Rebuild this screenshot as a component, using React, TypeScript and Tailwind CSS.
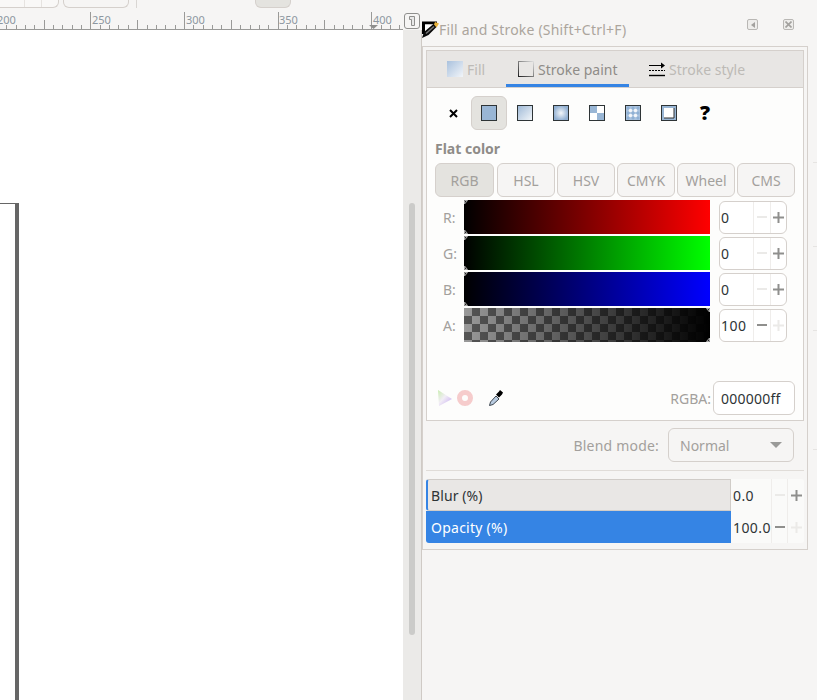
import React from "react";

const ticks: React.ReactNode[] = [];
for (let i = -1; i < 44; i++) {
  const x = 90.4 + (i - 10) * 9.36;
  const k = ((i % 10) + 10) % 10;
  const y = k === 0 ? 12 : k === 5 ? 20 : 25;
  ticks.push(<line key={i} x1={Math.round(x) + 0.5} x2={Math.round(x) + 0.5} y1={y} y2={29} stroke="#9a9a98" strokeWidth="1" />);
}

function Ruler() {
  return (
    <svg width="403" height="30" className="block absolute left-0 top-0">
      {ticks}
      <rect x="0" y="29" width="403" height="1" fill="#9a9a98" />
      {[[-3, "200"], [92, "250"], [186, "300"], [279, "350"], [373, "400"]].map(([x, t]) => (
        <text key={t as string} x={x as number} y="24" fontSize="11" fill="#8d97a0" fontFamily="Noto Sans, sans-serif">{t}</text>
      ))}
      <polygon points="369,25 378,25 373.5,29" fill="#8f8f8d" />
    </svg>
  );
}

function TitleIcon() {
  return (
    <svg width="17" height="17" viewBox="0 0 17 17">
      <path d="M0 0.5h15v3H3V13H0z" fill="#000" />
      <path d="M3 3.500H12.500L3 12z" fill="#fff" />
      <path d="M0 17l2-6 10-8.500 3 3-8.500 8.500z" fill="#0a0a0a" />
      <path d="M3.500 12l8-7 1 1-8 7z" fill="#777" />
      <path d="M13 1l4 1.500-2.500 4-2.500-3z" fill="#e8b23a" />
    </svg>
  );
}

function Mode({ kind }: { kind: string }) {
  const st = "#2e3436";
  return (
    <svg width="16" height="16" viewBox="0 0 16 16">
      <defs>
        <linearGradient id={"lin" + kind} x1="0" x2="1" y1="0" y2="1">
          <stop offset="0" stopColor="#9db8d6" />
          <stop offset="1" stopColor="#f4f7fa" />
        </linearGradient>
        <radialGradient id={"rad" + kind}>
          <stop offset="0" stopColor="#f4f7fa" />
          <stop offset="1" stopColor="#92b0d2" />
        </radialGradient>
      </defs>
      {kind === "flat" && <rect x="0.5" y="0.5" width="15" height="15" fill="#99b6d5" stroke={st} />}
      {kind === "lin" && <rect x="0.5" y="0.5" width="15" height="15" fill={"url(#lin" + kind + ")"} stroke={st} />}
      {kind === "rad" && <rect x="0.5" y="0.5" width="15" height="15" fill={"url(#rad" + kind + ")"} stroke={st} />}
      {kind === "mesh" && (
        <>
          <rect x="0.5" y="0.5" width="15" height="15" fill="#fff" />
          <rect x="1" y="1" width="7" height="7" fill="#99b6d5" />
          <rect x="8" y="8" width="7" height="7" fill="#99b6d5" />
          <rect x="0.5" y="0.5" width="15" height="15" fill="none" stroke={st} />
        </>
      )}
      {kind === "pat" && (
        <>
          <rect x="0.5" y="0.5" width="15" height="15" fill="#a9c2de" />
          {[5.5, 10.5].flatMap((x) => [5.5, 10.5].map((y) => <circle key={x + "-" + y} cx={x} cy={y} r="1.8" fill="#f3f6fa" />))}
          {[3, 8, 13].flatMap((x) => [3, 8, 13].map((y) => <circle key={"d" + x + "-" + y} cx={x} cy={y} r="1.5" fill="#8fb0d4" />))}
          <rect x="0.5" y="0.5" width="15" height="15" fill="none" stroke={st} />
        </>
      )}
      {kind === "swatch" && (
        <>
          <rect x="0.5" y="0.5" width="15" height="15" fill="#99b6d5" stroke={st} />
          <rect x="3" y="3" width="10" height="10" fill="#fff" />
          <path d="M13 3v10H3" fill="none" stroke="#333" strokeWidth="1" />
        </>
      )}
    </svg>
  );
}

function Spin({ value, minusOn, plusOn }: { value: string; minusOn: boolean; plusOn: boolean }) {
  return (
    <div className="flex h-[33px] w-[68px] rounded-md border border-[#d5d0cc] bg-white">
      <div className="w-[33px] pl-[1px] flex items-center text-[14px] tracking-[0.5px] text-[#2e3436]">{value}</div>
      <div className="w-[17px] border-l border-[#efedeb] flex items-center justify-center">
        <span className={"block h-[2px] w-[10px] " + (minusOn ? "bg-[#8f8f8d]" : "bg-[#ebeae8]")} />
      </div>
      <div className="flex-1 border-l border-[#efedeb] flex items-center justify-center">
        <PlusMark on={plusOn} />
      </div>
    </div>
  );
}

function PlusMark({ on }: { on: boolean }) {
  return (
    <svg width="11" height="11" viewBox="0 0 11 11">
      <path d="M0 5.5h11M5.5 0v11" stroke={on ? "#8f8f8d" : "#ebeae8"} strokeWidth="2" />
    </svg>
  );
}

function Marker({ side, v }: { side: "l" | "r"; v: "t" | "b" }) {
  const pts = side === "l" ? (v === "t" ? "0.5,4 3.5,0.5 0.5,0.5" : "0.5,0 3.5,3.5 0.5,3.5") : v === "t" ? "0.5,0.5 3.5,0.5 3.5,4" : "3.5,0 3.5,3.5 0.5,3.5";
  const pos = (side === "l" ? "left-0 " : "right-0 ") + (v === "t" ? "top-0" : "bottom-0");
  return (
    <svg width="4" height="4" className={"absolute " + pos}>
      <polygon points={pts} fill="#222" stroke="#a8a8a8" strokeWidth="1" />
    </svg>
  );
}

function SliderRow({ label, bar, value, side = "l", minusOn = false, plusOn = true }: { label: string; bar: string; value: string; side?: "l" | "r"; minusOn?: boolean; plusOn?: boolean }) {
  return (
    <div className="flex items-center h-[34px] mb-[2px]">
      <span className="w-[29px] pl-[8px] text-[14px] text-[#a3a09c]">{label}</span>
      <div className={"relative h-[34px] w-[246px] " + bar}>
        <Marker side={side} v="t" />
        <Marker side={side} v="b" />
      </div>
      <div className="ml-[9px]">
        <Spin value={value} minusOn={minusOn} plusOn={plusOn} />
      </div>
    </div>
  );
}

export default function App() {
  return (
    <div className="relative flex h-[700px] w-[817px] overflow-hidden bg-[#f6f5f4] font-['Noto_Sans',sans-serif] text-[14px]">
      {/* Left: rulers and canvas */}
      <div className="relative flex h-full w-[422px] flex-col pt-[30px]">
        <Ruler />
        <div className="absolute left-0 top-0 flex h-[8px] items-start">
          <div className="flex h-[8px] w-[59px] rounded-br-md border-b border-r border-[#d5d0cc] bg-[#f9f8f7]">
            <div className="w-[25px] border-r border-[#e6e3e0]" />
            <div className="w-[17px] border-r border-[#e6e3e0]" />
          </div>
          <div className="ml-[4px] h-[8px] w-[66px] rounded-b-md border border-t-0 border-[#d5d0cc]" />
          <div className="ml-[7px] h-[8px] w-px bg-[#d9d6d3]" />
          <div className="ml-[118px] h-[8px] w-[36px] rounded-b-md border border-t-0 border-[#d5d0cc] bg-[#e4e3df]" />
        </div>
        <div className="absolute left-[404px] top-[13px] flex h-[16px] w-[16px] items-center justify-center rounded-[3px] border border-[#8f8f8d] bg-[#f6f5f4] z-10">
          <svg width="8" height="10" viewBox="0 0 8 10">
            <path d="M1.5.5h5v9h-3v-6h-2z" fill="#e8e8e8" stroke="#8f8f8d" />
          </svg>
        </div>
        <div className="flex flex-1">
          <div className="w-[403px] bg-white pt-[173px]">
            <div className="h-full w-[19px] border-r-[4px] border-t border-[#666666]" />
          </div>
          <div className="w-[19px] border-r border-[#cfcac5] bg-[#ebeae8] px-[6px] pt-[173px]">
            <div className="h-[432px] w-[6px] rounded-[3px] bg-[#cbcbc9]" />
          </div>
        </div>
      </div>

      {/* Right: dialog */}
      <div className="flex flex-1 flex-col">
        <div className="flex h-[46px] items-start">
          <div className="mt-[21px]"><TitleIcon /></div>
          <span className="mt-[20px] text-[14px] leading-[20px] tracking-[0.2px] text-[#aca59d]">Fill and Stroke (Shift+Ctrl+F)</span>
          <div className="ml-[121px] mt-[19px] flex h-[11px] w-[11px] items-center justify-center rounded-[2px] border border-[#b9b7b4] bg-[#eeedeb]">
            <span className="block h-0 w-0 border-y-[3px] border-r-[4px] border-y-transparent border-r-[#a3a19e]" />
          </div>
          <div className="ml-[25px] mt-[19px] flex h-[11px] w-[11px] items-center justify-center rounded-[2px] border border-[#b9b7b4] bg-[#eeedeb]">
            <svg width="7" height="7" viewBox="0 0 7 7"><path d="M0.5.5l6 6M6.5.5l-6 6" stroke="#a3a19e" strokeWidth="1.6" /></svg>
          </div>
        </div>

        <div className="h-[504px] w-[386px] border border-[#d5d0cc] pl-[3px] pr-[3px] pt-[3px]">
          {/* Notebook */}
          <div className="h-[371px] w-[378px] border border-[#d5d0cc] bg-[#fdfdfc]">
            <div className="flex h-[37px] items-start border-b border-[#d5d0cc] bg-[#e8e6e4]">
              <div className="flex h-[36px] w-[79px] items-center pl-[20px]">
                <span className="block h-[16px] w-[16px] bg-linear-to-br/srgb from-[#a9c1dd] to-[#f2f5f9]" />
                <span className="ml-[4px] text-[#bdbab6]">Fill</span>
              </div>
              <div className="flex h-[36px] w-[123px] items-center border-b-[3px] border-[#3584e4] pl-[12px] pt-[3px]">
                <svg width="16" height="16" viewBox="0 0 16 16">
                  <defs>
                    <linearGradient id="strokeTab" x1="0" x2="1" y1="1" y2="0">
                      <stop offset="0" stopColor="#222" />
                      <stop offset="1" stopColor="#ddd" />
                    </linearGradient>
                  </defs>
                  <rect x="0.5" y="0.5" width="15" height="15" fill="none" stroke="url(#strokeTab)" />
                </svg>
                <span className="ml-[4px] text-[#8f8c88]">Stroke paint</span>
              </div>
              <div className="flex h-[36px] items-center pl-[20px]">
                <svg width="16" height="16" viewBox="0 0 16 16">
                  <path d="M0 4.5h13" stroke="#000" strokeWidth="1" />
                  <path d="M12 1.5l4 3-4 3z" fill="#000" />
                  <path d="M0 9.5h16" stroke="#000" strokeDasharray="2 1" />
                  <path d="M0 14.5h16" stroke="#000" strokeWidth="1.4" />
                </svg>
                <span className="ml-[4px] text-[#bdbab6]">Stroke style</span>
              </div>
            </div>

            <div className="pl-[8px]">
              <div className="mt-[8px] flex h-[34px] items-center">
                <div className="flex h-[34px] w-[36px] items-center justify-center">
                  <svg width="9" height="9" viewBox="0 0 9 9"><path d="M1 1l7 7M8 1L1 8" stroke="#000" strokeWidth="2" /></svg>
                </div>
                <div className="flex h-[34px] w-[36px] items-center justify-center rounded-md border border-[#d5d0cc] bg-[#e4e3df]"><Mode kind="flat" /></div>
                <div className="flex h-[34px] w-[36px] items-center justify-center"><Mode kind="lin" /></div>
                <div className="flex h-[34px] w-[36px] items-center justify-center"><Mode kind="rad" /></div>
                <div className="flex h-[34px] w-[36px] items-center justify-center"><Mode kind="mesh" /></div>
                <div className="flex h-[34px] w-[36px] items-center justify-center"><Mode kind="pat" /></div>
                <div className="flex h-[34px] w-[36px] items-center justify-center"><Mode kind="swatch" /></div>
                <div className="flex h-[34px] w-[36px] items-center justify-center text-[20px] font-black leading-none text-black">?</div>
              </div>

              <div className="mt-[9px] h-[20px] text-[14px] font-bold leading-[20px] text-[#8f8c88]">Flat color</div>

              <div className="mt-[4px] flex gap-[2px]">
                {["RGB", "HSL", "HSV", "CMYK", "Wheel", "CMS"].map((t, i) => (
                  <div
                    key={t}
                    className={
                      "flex h-[34px] items-center justify-center rounded-md border border-[#d5d0cc] text-[#a3a09c] " +
                      (i === 0 ? "w-[59px] bg-[#e4e3df]" : i === 1 ? "ml-[1px] w-[58px] bg-[#f6f5f4]" : "w-[58px] bg-[#f6f5f4]")
                    }
                  >
                    {t}
                  </div>
                ))}
              </div>

              <div className="mt-[3px]">
                <SliderRow label="R:" bar="bg-linear-to-r/srgb from-[#000000] to-[#ff0000]" value="0" />
                <SliderRow label="G:" bar="bg-linear-to-r/srgb from-[#000000] to-[#00ff00]" value="0" />
                <SliderRow label="B:" bar="bg-linear-to-r/srgb from-[#000000] to-[#0000ff]" value="0" />
                <SliderRow
                  label="A:"
                  bar="bg-[linear-gradient(to_right,rgba(0,0,0,0),#000),conic-gradient(#555_25%,#999_0_50%,#555_0_75%,#999_0)] bg-[size:100%_100%,16px_16px]"
                  value="100"
                  side="r"
                  minusOn
                  plusOn={false}
                />
              </div>

              <div className="mt-[39px] flex h-[34px] items-center">
                <svg width="16" height="16" viewBox="0 0 16 16" className="ml-[2px]">
                  <defs>
                    <linearGradient id="tri" x1="0" x2="1" y1="0" y2="1">
                      <stop offset="0" stopColor="#c9ecb0" />
                      <stop offset="0.45" stopColor="#f2eef6" />
                      <stop offset="1" stopColor="#c2a6ee" />
                    </linearGradient>
                  </defs>
                  <polygon points="1,0 15,9 2,16" fill="url(#tri)" />
                </svg>
                <svg width="16" height="16" viewBox="0 0 16 16" className="ml-[4px]">
                  <circle cx="8" cy="8" r="5.5" fill="none" stroke="#f6cccc" strokeWidth="5" />
                </svg>
                <svg width="16" height="18" viewBox="0 0 16 18" className="ml-[15px]">
                  <path d="M1.5 16.5l1-3.5 5.5-6 3 3-6 5.500z" fill="#b8cbe0" stroke="#3d4650" />
                  <path d="M8 5.500l3-3 1-1.500 3 2.500-1 2-3 3z" fill="#000" />
                </svg>
                <span className="ml-auto mr-[2px] text-[#a3a09c]">RGBA:</span>
                <div className="mr-[8px] flex h-[34px] w-[82px] items-center rounded-md border border-[#d5d0cc] bg-white pl-[7px] tracking-[0.25px] text-[#2e3436]">000000ff</div>
              </div>
            </div>
          </div>

          {/* Blend */}
          <div className="flex h-[50px] items-center justify-end border-b border-[#e0dcd8] pb-px pr-[10px]">
            <span className="mr-[9px] tracking-[0.2px] text-[#a3a09c]">Blend mode:</span>
            <div className="flex h-[34px] w-[126px] items-center justify-between rounded-md border border-[#d5d0cc] bg-[#f6f5f4] pl-[11px] pr-[11px] text-[#a3a09c]">
              <span>Normal</span>
              <span className="block h-0 w-0 border-x-[6px] border-t-[6px] border-x-transparent border-t-[#9a9a98]" />
            </div>
          </div>

          {/* Blur / Opacity */}
          <div className="mt-[8px] flex w-[378px] rounded-[3px] bg-[#fafaf9]">
            <div className="w-[305px]">
              <div className="flex h-[32px] items-center rounded-l-[3px] border border-l-2 border-[#d0ccc8] border-l-[#3584e4] bg-[#e9e7e5] pl-[3px] pt-px tracking-[0.1px] text-[#2e3436]">Blur (%)</div>
              <div className="flex h-[32px] items-center rounded-bl-[3px] bg-[#3584e4] pl-[5px] pt-px tracking-[0.25px] text-white">Opacity (%)</div>
            </div>
            <div className="flex-1">
              {[
                { v: "0.0", m: false, p: true },
                { v: "100.0", m: true, p: false },
              ].map((r) => (
                <div key={r.v} className="flex h-[32px]">
                  <div className="flex w-[40px] items-center pl-[2px] tracking-[0.4px] text-[#2e3436]">{r.v}</div>
                  <div className="flex w-[16px] items-center justify-center border-l border-[#efedeb]">
                    <span className={"block h-[2px] w-[10px] " + (r.m ? "bg-[#8f8f8d]" : "bg-[#ebeae8]")} />
                  </div>
                  <div className="flex flex-1 items-center justify-center border-l border-[#efedeb]">
                    <PlusMark on={r.p} />
                  </div>
                </div>
              ))}
            </div>
          </div>
        </div>
      </div>

      {/* faint edge ticks of the neighbouring panel */}
      <div className="absolute left-[813px] top-[162px] h-px w-[4px] bg-[#e6e4e2]" />
      <div className="absolute left-[813px] top-[246px] h-px w-[4px] bg-[#e6e4e2]" />
      <div className="absolute left-[813px] top-[330px] h-px w-[4px] bg-[#e6e4e2]" />
      <div className="absolute left-[813px] top-[449px] h-px w-[4px] bg-[#e6e4e2]" />
    </div>
  );
}
